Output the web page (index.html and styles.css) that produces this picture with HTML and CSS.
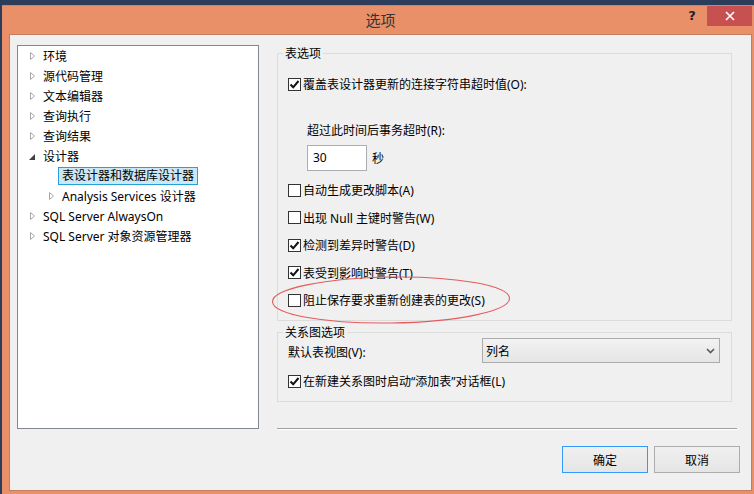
FILE: index.html
```html
<!DOCTYPE html>
<html lang="zh-CN">
<head>
    <meta charset="UTF-8">
    <title>选项</title>
    <link rel="stylesheet" href="styles.css">
</head>
<body>
<div class="window">
    <div class="titlebar">
        <span></span>
        <span class="title">选项</span>
        <div class="controls">
            <span class="help">?</span>
            <span class="close">
                <svg width="10" height="10" viewBox="0 0 10 10"><path d="M1 1 L9 9 M9 1 L1 9" stroke="#fff" stroke-width="1.6" fill="none"/></svg>
            </span>
        </div>
    </div>

    <div class="client">
        <div class="main">
            <ul class="tree">
                <li class="node"><span class="toggle"><svg width="5" height="8" viewBox="0 0 5 8"><path d="M0.5 0.5 L4.5 4 L0.5 7.5 Z" fill="none" stroke="#a6a6a6"/></svg></span>环境</li>
                <li class="node"><span class="toggle"><svg width="5" height="8" viewBox="0 0 5 8"><path d="M0.5 0.5 L4.5 4 L0.5 7.5 Z" fill="none" stroke="#a6a6a6"/></svg></span>源代码管理</li>
                <li class="node"><span class="toggle"><svg width="5" height="8" viewBox="0 0 5 8"><path d="M0.5 0.5 L4.5 4 L0.5 7.5 Z" fill="none" stroke="#a6a6a6"/></svg></span>文本编辑器</li>
                <li class="node"><span class="toggle"><svg width="5" height="8" viewBox="0 0 5 8"><path d="M0.5 0.5 L4.5 4 L0.5 7.5 Z" fill="none" stroke="#a6a6a6"/></svg></span>查询执行</li>
                <li class="node"><span class="toggle"><svg width="5" height="8" viewBox="0 0 5 8"><path d="M0.5 0.5 L4.5 4 L0.5 7.5 Z" fill="none" stroke="#a6a6a6"/></svg></span>查询结果</li>
                <li class="node"><span class="toggle open"><svg width="6" height="6" viewBox="0 0 6 6"><path d="M6 0 L6 6 L0 6 Z" fill="#404040"/></svg></span>设计器</li>
                <li class="node child"><span class="toggle"></span><span class="selected">表设计器和数据库设计器</span></li>
                <li class="node child"><span class="toggle"><svg width="5" height="8" viewBox="0 0 5 8"><path d="M0.5 0.5 L4.5 4 L0.5 7.5 Z" fill="none" stroke="#a6a6a6"/></svg></span>Analysis Services 设计器</li>
                <li class="node"><span class="toggle"><svg width="5" height="8" viewBox="0 0 5 8"><path d="M0.5 0.5 L4.5 4 L0.5 7.5 Z" fill="none" stroke="#a6a6a6"/></svg></span>SQL Server AlwaysOn</li>
                <li class="node"><span class="toggle"><svg width="5" height="8" viewBox="0 0 5 8"><path d="M0.5 0.5 L4.5 4 L0.5 7.5 Z" fill="none" stroke="#a6a6a6"/></svg></span>SQL Server 对象资源管理器</li>
            </ul>

            <div class="pane">
                <fieldset class="group group-table">
                    <legend>表选项</legend>
                    <div class="check-row first"><span class="box checked"><svg width="11" height="11" viewBox="0 0 11 11"><path d="M1.5 5.5 L4.2 8.3 L9.5 2" fill="none" stroke="#111" stroke-width="2"/></svg></span>覆盖表设计器更新的连接字符串超时值(O):</div>
                    <div class="indent">
                        <div class="field-label">超过此时间后事务超时(R):</div>
                        <div class="timeout"><span class="textbox">30</span><span class="unit">秒</span></div>
                    </div>
                    <div class="check-list">
                        <div class="check-row"><span class="box"></span>自动生成更改脚本(A)</div>
                        <div class="check-row"><span class="box"></span>出现 Null 主键时警告(W)</div>
                        <div class="check-row"><span class="box checked"><svg width="11" height="11" viewBox="0 0 11 11"><path d="M1.5 5.5 L4.2 8.3 L9.5 2" fill="none" stroke="#111" stroke-width="2"/></svg></span>检测到差异时警告(D)</div>
                        <div class="check-row"><span class="box checked"><svg width="11" height="11" viewBox="0 0 11 11"><path d="M1.5 5.5 L4.2 8.3 L9.5 2" fill="none" stroke="#111" stroke-width="2"/></svg></span>表受到影响时警告(T)</div>
                        <div class="check-row"><span class="box"></span>阻止保存要求重新创建表的更改(S)</div>
                    </div>
                </fieldset>

                <fieldset class="group group-diagram">
                    <legend>关系图选项</legend>
                    <div class="select-row">
                        <span class="select-label">默认表视图(V):</span>
                        <div class="select">
                            <span>列名</span>
                            <svg class="chevron" width="9" height="6" viewBox="0 0 9 6"><path d="M1 1 L4.5 4.5 L8 1" fill="none" stroke="#5a5a5a" stroke-width="1.6"/></svg>
                        </div>
                    </div>
                    <div class="check-row second"><span class="box checked"><svg width="11" height="11" viewBox="0 0 11 11"><path d="M1.5 5.5 L4.2 8.3 L9.5 2" fill="none" stroke="#111" stroke-width="2"/></svg></span>在新建关系图时启动“添加表”对话框(L)</div>
                </fieldset>

                <div class="separator"></div>

                <svg class="mark" width="242" height="50" viewBox="0 0 242 50">
                    <ellipse cx="121" cy="25" rx="118.5" ry="23" fill="none" stroke="#e65a5a" stroke-width="1.1" transform="rotate(-0.8 121 25)"/>
                </svg>
            </div>
        </div>

        <div class="buttons">
            <button type="button" class="default">确定</button>
            <button type="button">取消</button>
        </div>
    </div>
</div>
</body>
</html>
```

FILE: styles.css
```css
body {
    margin: 0;
    background-color: #2c3c5b;
    font-family: "Noto Sans", "Noto Sans CJK SC", sans-serif;
    font-size: 12px;
    color: #000;
}
.window {
    box-sizing: border-box;
    margin: 5px 0 0 2px;
    height: 489px;
    padding: 0 2px 3px 7px;
    background-color: #ea9068;
    border-top: 1px solid #d9835e;
}
.titlebar {
    display: grid;
    grid-template-columns: 1fr auto 1fr;
    height: 28px;
}
.title {
    font-family: "Noto Sans CJK SC", sans-serif;
    font-size: 15px;
    line-height: 28px;
    color: #333;
}
.controls {
    display: flex;
    justify-content: flex-end;
    align-items: flex-start;
}
.help {
    width: 30px;
    margin-top: 2px;
    text-align: center;
    font-family: "DejaVu Sans", sans-serif;
    font-weight: bold;
    font-size: 13px;
    color: #222;
}
.close {
    display: flex;
    align-items: center;
    justify-content: center;
    width: 45px;
    height: 20px;
    background-color: #c75050;
}
.client {
    box-sizing: border-box;
    height: 457px;
    border: 1px solid #c67d5c;
    background-color: #f0f0f0;
    padding: 10px 11px 0 7px;
}
.main {
    display: flex;
    gap: 18px;
}
.tree {
    box-sizing: border-box;
    width: 242px;
    height: 384px;
    margin: 0;
    padding: 0;
    list-style: none;
    background-color: #fff;
    border: 1px solid #828790;
}
.node {
    display: flex;
    align-items: center;
    height: 20px;
    padding-left: 12px;
    white-space: nowrap;
}
.node.child {
    padding-left: 31px;
}
.toggle {
    display: flex;
    align-items: center;
    width: 13px;
    height: 20px;
}
.toggle.open svg {
    margin-left: -1px;
    margin-top: 1px;
}
.selected {
    margin-left: -4px;
    padding: 0 3px;
    line-height: 16px;
    border: 1px solid #26a0da;
    background-color: #cbe8f6;
}
.pane {
    position: relative;
    display: flex;
    flex-direction: column;
    flex: 1;
}
.group {
    box-sizing: border-box;
    width: 455px;
    margin: 0;
    border: 1px solid #dcdcdc;
    padding: 0 11px 10px 10px;
}
.group legend {
    margin-left: -5px;
    padding: 0 2px;
    line-height: 17px;
}
.check-row {
    display: flex;
    align-items: center;
    gap: 2px;
    height: 20px;
    white-space: nowrap;
}
.check-row.first {
    margin-top: 12px;
}
.box {
    box-sizing: border-box;
    display: flex;
    align-items: center;
    justify-content: center;
    width: 13px;
    height: 13px;
    border: 1px solid #333;
    background-color: #fff;
}
.indent {
    padding-left: 19px;
}
.field-label {
    margin-top: 27px;
    line-height: 20px;
}
.timeout {
    display: flex;
    align-items: center;
    margin-top: 4px;
}
.textbox {
    box-sizing: border-box;
    width: 60px;
    height: 26px;
    padding-left: 5px;
    line-height: 24px;
    border: 1px solid #abadb3;
    background-color: #fff;
}
.unit {
    margin-left: 5px;
}
.check-list {
    display: flex;
    flex-direction: column;
    gap: 7.5px;
    margin-top: 9px;
}
.group-diagram {
    margin-top: 3px;
}
.select-row {
    display: flex;
    align-items: center;
    margin-top: -3px;
}
.select-label {
    padding-top: 3px;
}
.select {
    box-sizing: border-box;
    display: flex;
    align-items: center;
    width: 238px;
    height: 25px;
    margin-left: auto;
    padding: 0 4px 0 3px;
    border: 1px solid #acacac;
    background: linear-gradient(#f2f2f2, #e5e5e5);
}
.chevron {
    margin-left: auto;
}
.check-row.second {
    margin-top: 8px;
}
.separator {
    width: 460px;
    margin-top: auto;
    margin-bottom: -1px;
    border-top: 1px solid #a0a0a0;
    border-bottom: 1px solid #fff;
}
.mark {
    position: absolute;
    left: -7px;
    top: 230px;
}
.buttons {
    display: flex;
    justify-content: flex-end;
    gap: 6px;
    margin-top: 17px;
}
button {
    width: 86px;
    height: 27px;
    padding: 0;
    font-family: "Noto Sans CJK SC", sans-serif;
    font-size: 12px;
    color: #000;
    border: 1px solid #acacac;
    background: linear-gradient(#f0f0f0, #e5e5e5);
}
button.default {
    border-color: #3399ff;
}
```
